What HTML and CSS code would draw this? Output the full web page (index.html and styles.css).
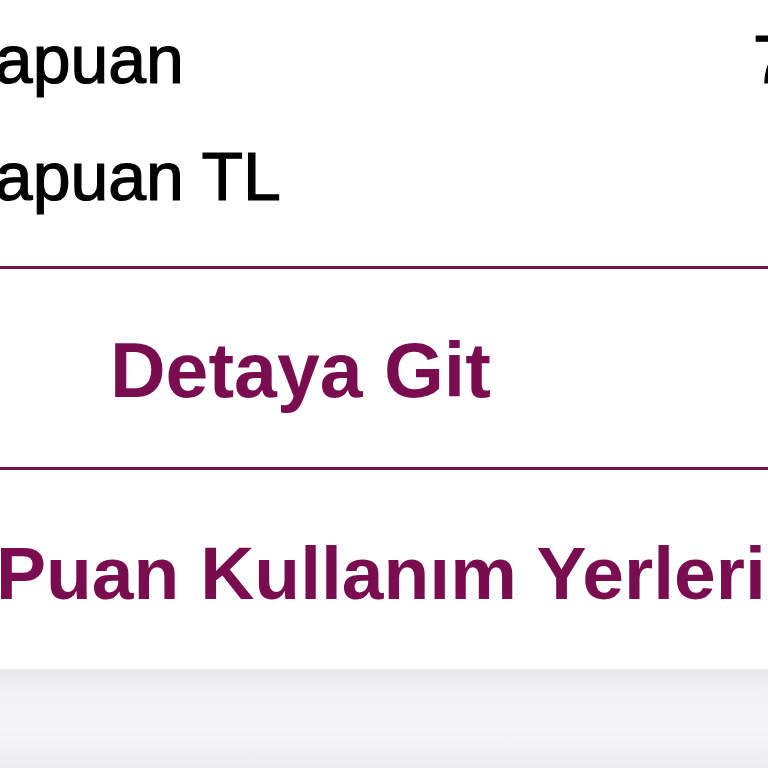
FILE: index.html
```html
<!DOCTYPE html>
<html lang="tr">
<head>
  <meta charset="UTF-8">
  <meta name="viewport" content="width=device-width, initial-scale=1.0">
  <title>Parapuan</title>
  <link rel="stylesheet" href="styles.css">
</head>
<body>
  <div class="screen">
    <div class="summary">
      <div class="row">
        <span class="label">Parapuan</span>
        <span class="value">7.450</span>
      </div>
      <div class="row">
        <span class="label">Parapuan TL</span>
        <span class="value">7,45</span>
      </div>
    </div>

    <a class="detail" href="#">Detaya Git</a>

    <a class="usage" href="#">Puan Kullanım Yerleri</a>

    <div class="footer"></div>
  </div>
</body>
</html>
```

FILE: styles.css
```css
body {
  margin: 0;
  overflow: hidden;
  background-color: #fff;
  font-family: "Liberation Sans", Arial, sans-serif;
}

.screen {
  width: 1060px;
  margin-left: -111px;
}

.summary {
  padding: 1px 26px 31px 0;
  border-bottom: 3px solid #761349;
}

.row {
  display: flex;
  justify-content: space-between;
  font-size: 68px;
  line-height: 117px;
  color: #000;
  -webkit-text-stroke: 1.2px #000;
}

.detail {
  display: block;
  padding: 4px 0 0 221px;
  font-size: 77px;
  font-weight: bold;
  line-height: 194px;
  color: #7a0c50;
  text-decoration: none;
  border-bottom: 3px solid #761349;
}

.usage {
  display: block;
  padding: 65px 0 58px 107px;
  font-size: 75px;
  font-weight: bold;
  line-height: 76px;
  color: #7a0c50;
  text-decoration: none;
  white-space: nowrap;
}

.footer {
  height: 120px;
  background: linear-gradient(#e8e8ea, #f2f2f4 22px, #f6f6f8 60px, #ededef 100px);
}
```
